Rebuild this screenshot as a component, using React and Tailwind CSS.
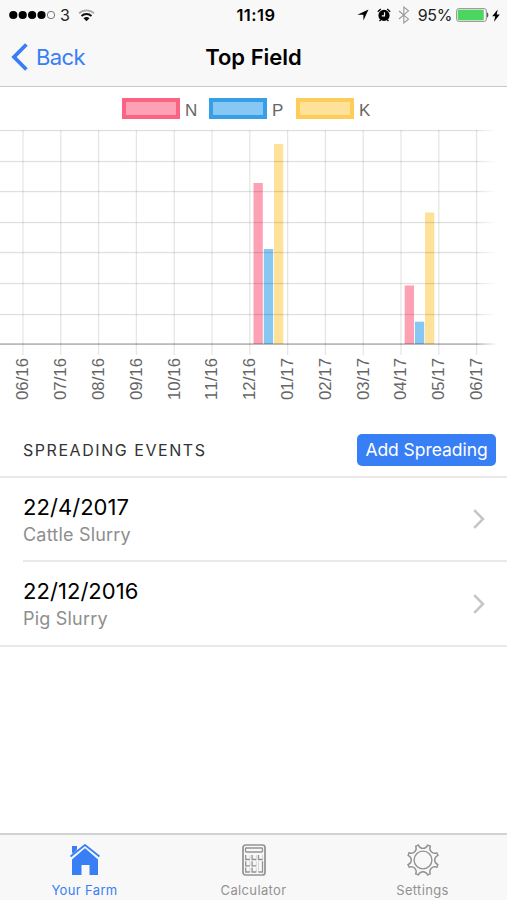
const MONTHS = [
  "06/16", "07/16", "08/16", "09/16", "10/16", "11/16", "12/16",
  "01/17", "02/17", "03/17", "04/17", "05/17", "06/17",
];

const NUTRIENTS = [
  { label: "N", border: "border-[#fb6384]", fill: "bg-[#ffa1b5]" },
  { label: "P", border: "border-[#379fe8]", fill: "bg-[#86c7f3]" },
  { label: "K", border: "border-[#fdcc59]", fill: "bg-[#ffe29a]" },
];

const GRID_ROWS = [43.5, 74.5, 104.5, 135.5, 165.5, 196.5, 227.5];

// bar tops are measured from the top of the chart, baseline is 257
const BARS = [
  { x: 253.5, top: 96, color: "#ff6384" },
  { x: 263.8, top: 162, color: "#36a2eb" },
  { x: 274, top: 57, color: "#ffce56" },
  { x: 404.7, top: 198.5, color: "#ff6384" },
  { x: 414.9, top: 234.7, color: "#36a2eb" },
  { x: 425, top: 125.5, color: "#ffce56" },
];

const EVENTS = [
  { date: "22/4/2017", type: "Cattle Slurry" },
  { date: "22/12/2016", type: "Pig Slurry" },
];

function StatusBar() {
  return (
    <div className="grid h-[30px] grid-cols-3 items-center text-black">
      <div className="flex items-center pl-[9px]">
        <svg width="47" height="10" viewBox="0 0 47 10">
          {[4.3, 13.7, 23.1, 32.5].map((cx) => (
            <circle key={cx} cx={cx} cy="5" r="4.1" />
          ))}
          <circle cx="42" cy="5" r="3.7" fill="none" stroke="#555" strokeWidth="0.8" />
        </svg>
        <span className="ml-[4px] text-[16px] leading-[30px] text-[#222]">3</span>
        <svg className="ml-[8px]" width="17" height="13" viewBox="0 0 17 13" fill="none">
          <path d="M1 4.3C5.2.3 11.8.3 16 4.3" stroke="#aaa" strokeWidth="1.7" />
          <path d="M3.5 7c2.8-2.7 7.2-2.7 10 0" stroke="#111" strokeWidth="1.8" />
          <path d="M5.5 9.2c1.7-1.6 4.3-1.6 6 0l-3 3.1z" fill="#111" />
        </svg>
      </div>
      <div className="pl-[5px] text-center text-[16.5px] font-semibold leading-[30px] tracking-[0.5px]">11:19</div>
      <div className="flex items-center justify-end pr-[7px]">
        <svg width="12" height="12" viewBox="0 0 12 12">
          <path d="M11.5.5 6.4 11.6V5.7H.4z" />
        </svg>
        <svg className="ml-[8px]" width="14" height="14" viewBox="0 0 14 14">
          <circle cx="7" cy="7.4" r="5.6" />
          <path d="M.8 3.8 3.8 1M13.2 3.8 10.2 1M2.5 13l1.3-1.3M11.5 13l-1.3-1.3" stroke="#000" strokeWidth="1.3" />
          <path d="M7.5 4.3v3.5H4.8" fill="none" stroke="#f8f8f8" strokeWidth="1.2" />
        </svg>
        <svg className="ml-[7px]" width="12" height="18" viewBox="0 0 12 18" fill="none" stroke="#999" strokeWidth="1.1">
          <path d="m1 5 9.5 8.2L5.8 17V1l4.7 3.8L1 13" />
        </svg>
        <span className="ml-[8px] text-[16px] leading-[30px] tracking-[-0.4px] text-[#222]">95%</span>
        <svg className="ml-[4px]" width="33" height="14" viewBox="0 0 33 14">
          <rect x=".7" y=".7" width="29.6" height="12.6" rx="2" fill="#fff" stroke="#888" strokeWidth="1" />
          <rect x="1.8" y="1.8" width="26" height="10.4" rx="1" fill="#4cd65f" />
          <path d="M31 4.5c1.8.3 1.8 4.7 0 5z" fill="#555" />
        </svg>
        <svg className="ml-[3px]" width="8" height="13" viewBox="0 0 8 13">
          <path d="M5.7.4.2 7.2h3L2 12.7l5.8-7.2H4.7z" />
        </svg>
      </div>
    </div>
  );
}

function NavBar() {
  return (
    <div className="grid h-[56px] grid-cols-[1fr_auto_1fr] items-center pb-[3px]">
      <button className="flex items-center pl-[11px] text-[#387ef5]">
        <svg width="17" height="28" viewBox="0 0 17 28" fill="none" stroke="currentColor" strokeWidth="3.8">
          <path d="M15.4 1.5 3 14l12.4 12.5" />
        </svg>
        <span className="ml-[8px] mt-px text-[22px] leading-[28px] tracking-[-0.6px]">Back</span>
      </button>
      <h1 className="mt-px text-[22px] font-semibold leading-[28px] tracking-[0px] text-black">Top Field</h1>
      <span />
    </div>
  );
}

function Legend() {
  return (
    <div className="flex h-[43px] items-center pl-[122px] font-['Liberation_Sans',sans-serif]">
      {NUTRIENTS.map((n) => (
        <div key={n.label} className="flex w-[87px] items-center">
          <span className={`h-[21px] w-[58px] border-4 ${n.border} ${n.fill}`} />
          <span className="ml-[5px] mt-[5px] text-[17px] leading-[20px] text-[#666]">{n.label}</span>
        </div>
      ))}
    </div>
  );
}

function SpreadingChart() {
  const columns = MONTHS.map((_, i) => 23 + i * 37.8);

  return (
    <svg className="-mt-[43px] block" width="507" height="337" viewBox="0 0 507 337">
      <defs>
        <linearGradient id="axisFade" gradientUnits="userSpaceOnUse" x1="476" y1="0" x2="497" y2="0">
          <stop offset="0" stopColor="#000" />
          <stop offset="1" stopColor="#000" stopOpacity="0" />
        </linearGradient>
      </defs>
      {BARS.map((bar) => (
        <rect key={bar.x} x={bar.x} y={bar.top} width="9.3" height={257 - bar.top} fill={bar.color} fillOpacity="0.6" />
      ))}
      <g stroke="#000" strokeOpacity="0.1">
        {columns.map((x) => (
          <path key={x} d={`M${x} 43v225`} strokeWidth="1.3" />
        ))}
      </g>
      {GRID_ROWS.map((y) => (
        <rect key={y} x="0" y={y - 0.6} width="507" height="1.3" fill="url(#axisFade)" fillOpacity="0.12" />
      ))}
      <rect x="0" y="256.2" width="507" height="1.8" fill="url(#axisFade)" fillOpacity="0.27" />
      <g className="[font-kerning:none]" fill="#666" fontFamily="Liberation Sans, sans-serif" fontSize="16.8">
        {MONTHS.map((month, i) => (
          <text key={month} transform={`translate(${columns[i] + 5.4} 313) rotate(-90)`}>
            {month}
          </text>
        ))}
      </g>
    </svg>
  );
}

function EventRow({ event, last }) {
  return (
    <li className={last ? "border-b-2 border-[#e9e9e9]" : ""}>
      <div className={`ml-[23px] flex items-center justify-between pr-[22px] ${last ? "h-[83px]" : "h-[84px] border-b-2 border-[#e9e9e9]"}`}>
        <div className="pt-[3px]">
          <h2 className="text-[22px] leading-[28px] tracking-[0.05px] text-black">{event.date}</h2>
          <p className="text-[18px] leading-[28px] tracking-[0.2px] text-[#8e8e8e]">{event.type}</p>
        </div>
        <svg width="12" height="20" viewBox="0 0 12 20" fill="none" stroke="#c5c5c5" strokeWidth="2.5">
          <path d="m1.2 1.2 8.8 8.8-8.8 8.8" />
        </svg>
      </div>
    </li>
  );
}

function HomeIcon() {
  return (
    <svg width="30" height="32" viewBox="0 0 30 32" fill="currentColor">
      <path d="M2 2h5v5L2 12zM2 15.5 15 4l13 11.5V31h-8.5V21h-8v10H2z" />
      <path d="M.4 13.1 15 1l14.6 12.1" fill="none" stroke="#f8f8f8" strokeWidth="4.5" />
      <path d="M.5 12.5 15 1l14.5 11.5" fill="none" stroke="currentColor" strokeWidth="1.8" />
      <path d="M2.3 3h4.5v3.2l-4.5 3.7z" />
    </svg>
  );
}

function CalculatorIcon() {
  return (
    <svg width="24" height="32" viewBox="0 0 24 32" fill="none" stroke="currentColor" strokeWidth="1.3">
      <rect x="1" y="1" width="22" height="30" rx="2.5" strokeWidth="1.7" />
      <rect x="3.5" y="4" width="17" height="4" rx=".8" />
      <path d="M3.7 11v4.5h4.2M10.1 11v4.5h4.2M16.5 11v4.5h4.2M3.7 17.3v4.5h4.2M10.1 17.3v4.5h4.2M3.7 23.5V28h4.2M10.1 23.5V28h4.2M20.5 17.3V28h-4" />
      <path d="M7.9 11v4.5M14.3 11v4.5M20.6 11v4.5M7.9 17.3v4.5M14.3 17.3v4.5M7.9 23.5V28M14.3 23.5V28M16.5 17.3V28" strokeOpacity=".35" strokeWidth="1" />
    </svg>
  );
}

function SettingsIcon() {
  return (
    <svg width="32" height="32" viewBox="-16 -16 32 32" fill="none" stroke="currentColor" strokeWidth="1.4" strokeLinecap="round">
      {[0, 45, 90, 135, 180, 225, 270, 315].map((angle) => (
        <path key={angle} transform={`rotate(${angle})`} d="M-4.7-14.9C-2.8-10.6 2.8-10.6 4.7-14.9L7.2-13.86" />
      ))}
      <circle r="8.9" />
    </svg>
  );
}

function TabBar() {
  const tabs = [
    { label: "Your Farm", icon: <HomeIcon />, active: true },
    { label: "Calculator", icon: <CalculatorIcon /> },
    { label: "Settings", icon: <SettingsIcon /> },
  ];

  return (
    <nav className="mt-auto grid h-[67px] grid-cols-3 border-t-2 border-[#d2d2d2] bg-[#f8f8f8]">
      {tabs.map((tab) => (
        <button key={tab.label} className={`flex flex-col items-center pt-[9px] ${tab.active ? "text-[#387ef5]" : "text-[#929292]"}`}>
          {tab.icon}
          <span className="mt-[6px] text-[13px] leading-[16px] tracking-[0.35px]">{tab.label}</span>
        </button>
      ))}
    </nav>
  );
}

export default function App() {
  return (
    <div className="flex h-[900px] w-[507px] flex-col overflow-hidden bg-white font-[Inter,sans-serif]">
      <header className="border-b border-[#c8c8c8] bg-[#f8f8f8]">
        <StatusBar />
        <NavBar />
      </header>

      <section>
        <Legend />
        <SpreadingChart />
      </section>

      <div className="flex h-[54px] items-center justify-between border-b-2 border-[#e9e9e9] pl-[23px] pr-[11px]">
        <h2 className="text-[16px] leading-[20px] tracking-[1.55px] text-[#333]">SPREADING EVENTS</h2>
        <button className="h-[32px] w-[139px] rounded-[5px] bg-[#387ef5] text-[17.5px] leading-[32px] tracking-[-0.05px] text-white">
          Add Spreading
        </button>
      </div>

      <ul>
        {EVENTS.map((event, i) => (
          <EventRow key={event.date} event={event} last={i === EVENTS.length - 1} />
        ))}
      </ul>

      <TabBar />
    </div>
  );
}
